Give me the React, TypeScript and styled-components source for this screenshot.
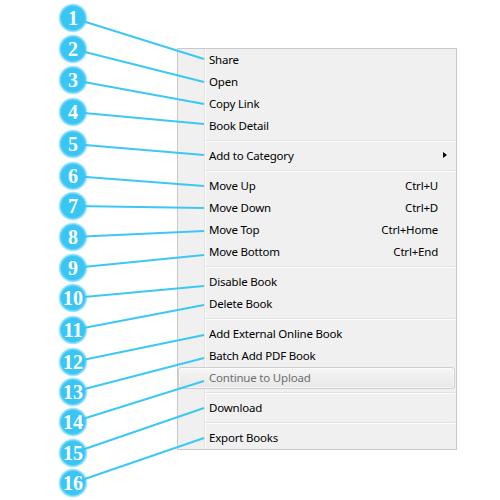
import { ReactElement } from 'react';
import styled, { createGlobalStyle, css } from 'styled-components';

const BLUE = '#3cc8f5';
const CIRCLE_X = 73;

type MenuEntry =
	| { kind: 'item'; label: string; shortcut?: string; submenu?: boolean; disabled?: boolean }
	| { kind: 'separator' };

const ENTRIES: MenuEntry[] = [
	{ kind: 'item', label: 'Share' },
	{ kind: 'item', label: 'Open' },
	{ kind: 'item', label: 'Copy Link' },
	{ kind: 'item', label: 'Book Detail' },
	{ kind: 'separator' },
	{ kind: 'item', label: 'Add to Category', submenu: true },
	{ kind: 'separator' },
	{ kind: 'item', label: 'Move Up', shortcut: 'Ctrl+U' },
	{ kind: 'item', label: 'Move Down', shortcut: 'Ctrl+D' },
	{ kind: 'item', label: 'Move Top', shortcut: 'Ctrl+Home' },
	{ kind: 'item', label: 'Move Bottom', shortcut: 'Ctrl+End' },
	{ kind: 'separator' },
	{ kind: 'item', label: 'Disable Book' },
	{ kind: 'item', label: 'Delete Book' },
	{ kind: 'separator' },
	{ kind: 'item', label: 'Add External Online Book' },
	{ kind: 'item', label: 'Batch Add PDF Book' },
	{ kind: 'item', label: 'Continue to Upload', disabled: true },
	{ kind: 'separator' },
	{ kind: 'item', label: 'Download' },
	{ kind: 'separator' },
	{ kind: 'item', label: 'Export Books' },
];

// circle centre y, and where the leader line touches the menu
const CALLOUTS: { cy: number; ty: number }[] = [
	{ cy: 18, ty: 59 },
	{ cy: 49, ty: 82 },
	{ cy: 80, ty: 104 },
	{ cy: 112, ty: 124 },
	{ cy: 144, ty: 155 },
	{ cy: 176, ty: 186 },
	{ cy: 206, ty: 208 },
	{ cy: 237, ty: 231 },
	{ cy: 268, ty: 255 },
	{ cy: 298, ty: 286 },
	{ cy: 330, ty: 305 },
	{ cy: 362, ty: 335 },
	{ cy: 392, ty: 358 },
	{ cy: 422, ty: 381 },
	{ cy: 453, ty: 408 },
	{ cy: 483, ty: 438 },
];

const GlobalStyle = createGlobalStyle`
	html, body {
		margin: 0;
		padding: 0;
		background: #ffffff;
	}
`;

const Page = styled.div`
	position: relative;
	width: 500px;
	height: 500px;
	padding: 48px 0 0 177px;
	box-sizing: border-box;
	overflow: hidden;
`;

const Menu = styled.div`
	width: 280px;
	box-sizing: border-box;
	border: 1px solid #c9c9c9;
	background:
		linear-gradient(
			to right,
			transparent 26px,
			#e2e3e3 26px,
			#e2e3e3 27px,
			#ffffff 27px,
			#ffffff 28px,
			transparent 28px
		),
		#f0f0f0;
	font-family: 'Noto Sans', 'Open Sans', sans-serif;
	font-size: 11.5px;
	letter-spacing: -0.2px;
	color: #000000;
	display: flex;
	flex-direction: column;
`;

const Item = styled.div<{ $disabled?: boolean }>`
	height: 22px;
	box-sizing: border-box;
	display: grid;
	grid-template-columns: 1fr auto 18px;
	align-items: center;
	padding-left: 31px;
	padding-bottom: 2px;
	white-space: nowrap;

	${({ $disabled }) =>
		$disabled &&
		css`
			margin-right: 1px;
			padding-left: 30px;
			padding-bottom: 1px;
			color: #6d6d6d;
			border: 1px solid #cfcfcf;
			border-radius: 3px;
			background: linear-gradient(to bottom, #f5f5f5, #e8e8e8);
			box-shadow: inset 0 0 0 1px rgba(255, 255, 255, 0.6);
		`}
`;

const Label = styled.span``;

const Shortcut = styled.span``;

const Arrow = styled.span`
	justify-self: start;
	width: 0;
	height: 0;
	margin-left: 5px;
	border-top: 3.5px solid transparent;
	border-bottom: 3.5px solid transparent;
	border-left: 4px solid #000000;
`;

const Separator = styled.div`
	height: 8px;
	margin: 0 1px 0 27px;
	background: linear-gradient(
		to bottom,
		transparent 3px,
		#e0e0e0 3px,
		#e0e0e0 4px,
		#ffffff 4px,
		#ffffff 5px,
		transparent 5px
	);
`;

const Callouts = styled.svg`
	position: absolute;
	top: 0;
	left: 0;
	width: 500px;
	height: 500px;
	pointer-events: none;
`;

const Number = styled.text`
	font-family: 'Liberation Serif', 'Times New Roman', serif;
	font-weight: bold;
	font-size: 20px;
	fill: #ffffff;
`;

const CalloutLayer = (): ReactElement => (
	<Callouts viewBox="0 0 500 500">
		<defs>
			<radialGradient id="dot">
				<stop offset="0%" stopColor="#3ac6f4" />
				<stop offset="80%" stopColor="#3ac6f4" />
				<stop offset="100%" stopColor="#3ac6f4" stopOpacity={0.25} />
			</radialGradient>
		</defs>
		{CALLOUTS.map(({ cy, ty }, i) => (
			<line
				key={`l${i}`}
				x1={CIRCLE_X}
				y1={cy}
				x2={204}
				y2={ty}
				stroke={BLUE}
				strokeWidth={2}
			/>
		))}
		{CALLOUTS.map(({ cy }, i) => (
			<g key={`c${i}`}>
				<circle cx={CIRCLE_X} cy={cy} r={14.5} fill="url(#dot)" />
				<Number x={CIRCLE_X} y={cy + 7} textAnchor="middle">
					{i + 1}
				</Number>
			</g>
		))}
	</Callouts>
);

export default function App(): ReactElement {
	return (
		<Page>
			<GlobalStyle />
			<Menu>
				{ENTRIES.map((entry, i) =>
					entry.kind === 'separator' ? (
						<Separator key={i} />
					) : (
						<Item key={i} $disabled={entry.disabled}>
							<Label>{entry.label}</Label>
							<Shortcut>{entry.shortcut}</Shortcut>
							{entry.submenu ? <Arrow /> : <span />}
						</Item>
					),
				)}
			</Menu>
			<CalloutLayer />
		</Page>
	);
}
